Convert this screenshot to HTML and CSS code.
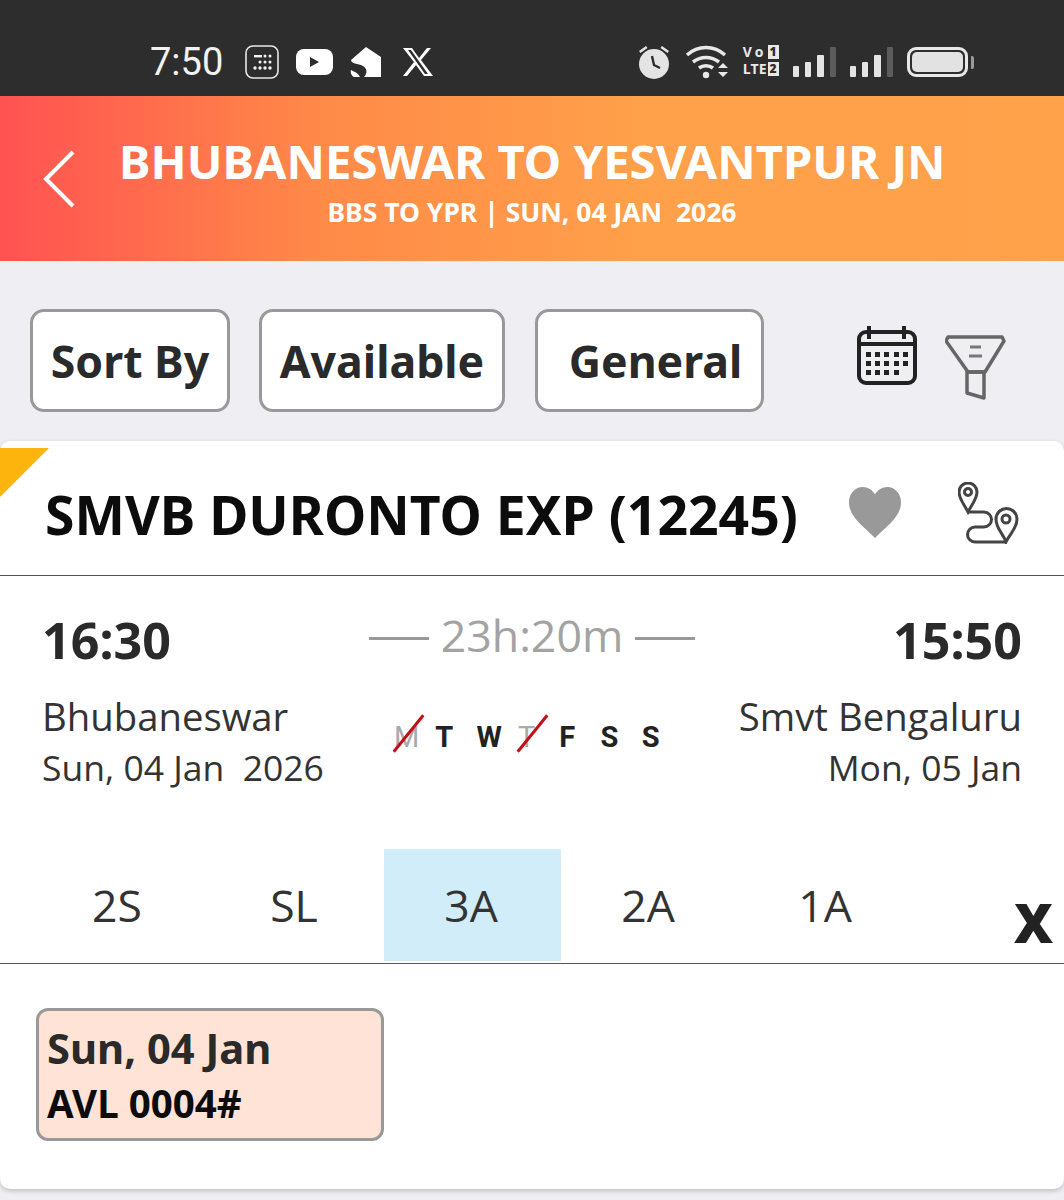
FILE: index.html
```html
<!DOCTYPE html>
<html lang="en">
<head>
    <meta charset="UTF-8">
    <meta name="viewport" content="width=device-width, initial-scale=1.0">
    <title>BHUBANESWAR TO YESVANTPUR JN</title>
    <link rel="stylesheet" href="styles.css">
</head>
<body>
    <div class="statusBar">
        <span class="clock">7:50</span>
        <div class="statusLeft">
            <svg width="34" height="34" viewBox="0 0 34 34"><rect x="1" y="1" width="32" height="32" rx="7" fill="none" stroke="#e8e8e8" stroke-width="1.6"/><g fill="#f2f2f2"><rect x="9" y="10" width="8" height="2.4"/><circle cx="20" cy="11" r="1.5"/><circle cx="25" cy="11" r="1.5"/><circle cx="15" cy="17" r="1.5"/><circle cx="20" cy="17" r="1.5"/><circle cx="25" cy="17" r="1.5"/><circle cx="10" cy="23" r="1.7"/><circle cx="15" cy="23" r="1.7"/><circle cx="20" cy="23" r="1.7"/><circle cx="25" cy="23" r="1.7"/></g></svg>
            <svg width="37" height="26" viewBox="0 0 37 26"><rect x="0" y="0" width="37" height="26" rx="8" fill="#fff"/><path d="M14 8l9 5-9 5z" fill="#2d2d2d"/></svg>
            <svg width="32" height="32" viewBox="0 0 32 32"><path d="M1 14L16 1l15 10v20H14c4-4 3-10-3-12l-6-1.500C3 17 1 16 1 14z" fill="#fff"/><path d="M1 24c4 2 7 3 9 7H4c-2-1-4-4-3-7z" fill="#fff"/></svg>
            <svg class="xLogo" width="32" height="30" viewBox="0 0 32 30"><path d="M1 1h9l7 10 8-10h4L19 13l12 16h-9l-8-11-9 11H1l11-14zM6 3l17 24h3L9 3z" fill="#fff"/></svg>
        </div>
        <div class="statusRight">
            <svg width="34" height="36" viewBox="0 0 34 36"><g fill="#e4e4e4"><circle cx="17" cy="20" r="15"/><path d="M2 7l7-5 1.500 2-7 5zM32 7l-7-5-1.500 2 7 5z"/></g><path d="M15 12l2 9 6 3" fill="none" stroke="#2d2d2d" stroke-width="2.400"/></svg>
            <svg width="44" height="36" viewBox="0 0 44 36"><g fill="none" stroke="#e8e8e8" stroke-width="3.600"><path d="M2 11c11-10 27-10 38 0"/><path d="M8 18c8-6 18-6 26 0"/><path d="M14 24c4-3 10-3 14 0"/></g><circle cx="21" cy="31" r="3.200" fill="#e8e8e8"/><path d="M38 19l5 5h-10zM33 28h10l-5 5z" fill="#e8e8e8"/></svg>
            <div class="netBadge">
                <div class="netRow"><span class="netVo">Vo</span><b>1</b></div>
                <div class="netRow"><span>LTE</span><b>2</b></div>
            </div>
            <div class="signal"><i class="s1"></i><i class="s2"></i><i class="s3"></i><i class="s4"></i></div>
            <div class="signal"><i class="s1"></i><i class="s2"></i><i class="s3"></i><i class="s4"></i></div>
            <div class="battery"><div class="batteryFill"></div></div>
            <div class="batteryTip"></div>
        </div>
    </div>

    <header class="topHeader">
        <svg class="backIcon" width="34" height="60" viewBox="0 0 34 60"><path d="M31 3L4 30l27 27" fill="none" stroke="#fff" stroke-width="4"/></svg>
        <div class="headerText">
            <h1>BHUBANESWAR TO YESVANTPUR JN</h1>
            <p>BBS TO YPR | SUN, 04 JAN &nbsp;2026</p>
        </div>
    </header>

    <section class="toolbar">
        <button class="toolBtn btnSort">Sort By</button>
        <button class="toolBtn btnAvail">Available</button>
        <button class="toolBtn btnGeneral">General</button>
        <svg class="calIcon" width="60" height="60" viewBox="0 0 60 60">
            <rect x="2" y="7" width="56" height="51" rx="7" fill="none" stroke="#222" stroke-width="4"/>
            <path d="M2 19h56" stroke="#222" stroke-width="4"/>
            <path d="M12 1v13M47 1v13" stroke="#222" stroke-width="4"/>
            <g fill="#222">
                <rect x="9" y="27" width="5" height="5"/><rect x="18" y="27" width="5" height="5"/><rect x="27" y="27" width="5" height="5"/><rect x="37" y="27" width="5" height="5"/><rect x="46" y="27" width="5" height="5"/>
                <rect x="9" y="36" width="5" height="5"/><rect x="18" y="36" width="5" height="5"/><rect x="27" y="36" width="5" height="5"/><rect x="37" y="36" width="5" height="5"/><rect x="46" y="36" width="5" height="5"/>
                <rect x="9" y="45" width="5" height="5"/><rect x="18" y="45" width="5" height="5"/><rect x="27" y="45" width="5" height="5"/><rect x="37" y="45" width="5" height="5"/>
            </g>
        </svg>
        <svg class="funnelIcon" width="62" height="66" viewBox="0 0 62 66">
            <path d="M3 3h54l2 4-19 31h-17L1 7z" fill="none" stroke="#666" stroke-width="3.500" stroke-linejoin="round"/>
            <path d="M22 38h17v26l-17-5z" fill="none" stroke="#666" stroke-width="3.500" stroke-linejoin="round"/>
            <path d="M25 13h11M24 22h13" stroke="#777" stroke-width="3"/>
        </svg>
    </section>

    <main class="card">
        <div class="cornerFlag"></div>
        <div class="trainRow">
            <h2>SMVB DURONTO EXP (12245)</h2>
            <svg class="heartIcon" width="54" height="51" viewBox="0 0 56 50" preserveAspectRatio="none"><path d="M28 50C18 40 1 30 1 15 1 6 8 0 15 0c6 0 10 3 13 7 3-4 7-7 13-7 7 0 14 6 14 15 0 15-17 25-27 35z" fill="#999"/></svg>
            <svg class="routeIcon" width="62" height="62" viewBox="0 0 62 62">
                <g fill="none" stroke="#444" stroke-width="3">
                    <path d="M10 30C6 22 1 17 1 10a9 9 0 0 1 18 0c0 7-5 12-9 20z"/>
                    <circle cx="10" cy="10" r="3.500"/>
                    <path d="M48 60c-3-9-10-13-10-23a10.500 10.500 0 0 1 21 0c0 10-7 14-11 23z"/>
                    <circle cx="48" cy="37" r="4"/>
                    <path d="M10 30h16a7.500 7.500 0 0 1 0 15h-9a7.500 7.500 0 0 0 0 15h31"/>
                </g>
            </svg>
        </div>

        <div class="timeGrid">
            <div class="timeLeft">
                <div class="timeBig">16:30</div>
                <div class="stationName">Bhubaneswar</div>
                <div class="stationDate">Sun, 04 Jan &nbsp;2026</div>
            </div>
            <div class="timeMid">
                <div class="duration"><span class="durDash"></span><span>23h:20m</span><span class="durDash"></span></div>
                <div class="days">
                    <span class="day off">M<i class="strike"></i></span>
                    <span class="day">T</span>
                    <span class="day">W</span>
                    <span class="day off">T<i class="strike"></i></span>
                    <span class="day">F</span>
                    <span class="day">S</span>
                    <span class="day">S</span>
                </div>
            </div>
            <div class="timeRight">
                <div class="timeBig">15:50</div>
                <div class="stationName">Smvt Bengaluru</div>
                <div class="stationDate">Mon, 05 Jan</div>
            </div>
        </div>

        <div class="classTabs">
            <div class="classTab">2S</div>
            <div class="classTab">SL</div>
            <div class="classTab active">3A</div>
            <div class="classTab">2A</div>
            <div class="classTab">1A</div>
            <div class="closeX">X</div>
        </div>

        <div class="availArea">
            <div class="availBox">
                <div class="availDate">Sun, 04 Jan</div>
                <div class="availStatus">AVL 0004#</div>
            </div>
        </div>
    </main>
</body>
</html>
```

FILE: styles.css
```css
* {
    box-sizing: border-box;
    font-family: "Open Sans", "Noto Sans", sans-serif;
}
html, body {
    margin: 0;
    padding: 0;
}
body {
    width: 1064px;
    height: 1200px;
    overflow: hidden;
    background: #eeeef3;
}

/* phone status bar */
.statusBar {
    height: 96px;
    background: #2d2d2d;
    display: flex;
    align-items: center;
    padding: 28px 90px 0 150px;
    color: #f2f2f2;
}
.clock {
    font-family: "Roboto", sans-serif;
    font-size: 38px;
    width: 95px;
}
.statusLeft {
    display: flex;
    align-items: center;
    gap: 17px;
}
.xLogo {
    margin-left: 3px;
}
.statusRight {
    margin-left: auto;
    display: flex;
    align-items: center;
    gap: 14px;
}
.netBadge {
    width: 36px;
    font-family: "Liberation Sans Narrow", "Roboto", sans-serif;
    font-size: 14px;
    font-weight: 700;
    line-height: 14px;
    color: #e8e8e8;
}
.netRow {
    display: flex;
    justify-content: space-between;
    margin-bottom: 3px;
}
.netVo {
    letter-spacing: 3px;
}
.netRow b {
    background: #e8e8e8;
    color: #2d2d2d;
    width: 11px;
    font-size: 12px;
    text-align: center;
}
.signal {
    display: flex;
    align-items: flex-end;
    gap: 6px;
    height: 30px;
}
.signal i {
    width: 6.300px;
    background: #e4e4e4;
    border-radius: 1px;
}
.signal .s1 { height: 11px; }
.signal .s2 { height: 15px; }
.signal .s3 { height: 22px; }
.signal .s4 { height: 30px; background: #5c5c5c; }
.battery {
    width: 61px;
    height: 30px;
    border: 3px solid #e8e8e8;
    border-radius: 9px;
    padding: 2px;
}
.batteryFill {
    height: 100%;
    background: #e2e2e2;
    border-radius: 5px;
}
.batteryTip {
    width: 3px;
    height: 13px;
    margin-left: -11px;
    background: #999;
    border-radius: 0 2px 2px 0;
}

/* orange header */
.topHeader {
    height: 165px;
    background: linear-gradient(90deg, #ff5252 0%, #ff8a48 30%, #ffa04a 60%, #ffa24a 100%);
    display: flex;
    align-items: center;
    padding-left: 42px;
}
.headerText {
    margin: 6px 0 0 43px;
    width: 826px;
    text-align: center;
    color: #fff;
}
.headerText h1 {
    margin: 0;
    font-family: "Noto Sans", sans-serif;
    font-size: 47.300px;
    font-weight: 700;
    line-height: 52px;
    white-space: nowrap;
}
.headerText p {
    margin: 9px 0 0 0;
    font-family: "Noto Sans", sans-serif;
    font-size: 26.500px;
    font-weight: 700;
    line-height: 32px;
}

/* filters row */
.toolbar {
    height: 180px;
    display: flex;
    align-items: center;
    padding: 18px 0 0 30px;
}
.toolBtn {
    height: 103px;
    background: #fff;
    border: 3px solid #999;
    border-radius: 14px;
    font-family: "Noto Sans", sans-serif;
    font-size: 44.600px;
    font-weight: 700;
    color: #2a2a2a;
    padding: 0;
}
.btnSort { width: 200px; }
.btnAvail { width: 246px; margin-left: 29px; }
.btnGeneral { width: 229px; margin-left: 30px; padding-left: 12px; }
.calIcon { margin-left: 93px; margin-top: -10px; }
.funnelIcon { margin-left: 28px; margin-top: 14px; }

/* train card */
.card {
    position: relative;
    height: 748px;
    background: #fff;
    border-radius: 10px;
    box-shadow: 0 2px 5px rgba(0, 0, 0, 0.2);
}
.cornerFlag {
    position: absolute;
    left: 0;
    top: 7px;
    width: 49px;
    height: 49px;
    background: #fdb50d;
    clip-path: polygon(0 0, 100% 0, 0 100%);
}
.trainRow {
    height: 135px;
    border-bottom: 1px solid #555;
    display: flex;
    align-items: center;
    padding: 13px 0 0 45px;
}
.trainRow h2 {
    margin: 0;
    width: 752px;
    font-family: "Noto Sans", sans-serif;
    font-size: 53.500px;
    font-weight: 700;
    color: #0c0c0c;
    white-space: nowrap;
}
.heartIcon { margin-left: 51px; margin-top: -5px; }
.routeIcon { margin-left: 56px; margin-top: -4px; }

.timeGrid {
    display: grid;
    grid-template-columns: 1fr 340px 1fr;
    padding: 32px 42px 0 42px;
    height: 273px;
    color: #333;
}
.timeBig {
    font-family: "Noto Sans", sans-serif;
    font-size: 50.200px;
    font-weight: 700;
    line-height: 64px;
    color: #2a2a2a;
}
.stationName {
    font-size: 38.300px;
    line-height: 52px;
    margin-top: 18px;
}
.stationDate {
    font-size: 35.500px;
    line-height: 50px;
}
.timeRight {
    text-align: right;
}
.duration {
    display: flex;
    align-items: center;
    justify-content: center;
    gap: 12px;
    font-size: 44.700px;
    line-height: 60px;
    margin-top: -3px;
    color: #a3a3a3;
}
.durDash {
    width: 60px;
    height: 3px;
    margin-top: 6px;
    background: #999;
}
.days {
    display: grid;
    grid-template-columns: repeat(7, 41.300px);
    padding-left: 32px;
    margin-top: 54px;
}
.day {
    position: relative;
    font-family: "Roboto", sans-serif;
    font-size: 29px;
    font-weight: 700;
    line-height: 36px;
    color: #222;
}
.day.off {
    font-weight: 400;
    color: #aaa;
}
.strike {
    position: absolute;
    left: -9px;
    top: 13px;
    width: 47px;
    height: 3px;
    background: #c01018;
    transform: rotate(-51deg);
}

/* class tabs */
.classTabs {
    height: 115px;
    display: flex;
    border-bottom: 1px solid #555;
    padding-left: 30px;
}
.classTab {
    width: 177px;
    height: 112px;
    font-size: 44.500px;
    padding: 0 3px 2px 0;
    display: flex;
    align-items: center;
    justify-content: center;
    color: #333;
}
.classTab.active {
    background: #d0edf9;
}
.closeX {
    margin-left: auto;
    margin-right: 11px;
    margin-bottom: 13px;
    align-self: flex-end;
    font-size: 54px;
    font-weight: 800;
    line-height: 56px;
    color: #222;
}

/* availability */
.availArea {
    padding: 44px 0 0 36px;
}
.availBox {
    width: 348px;
    height: 133px;
    background: #ffe3d6;
    border: 3px solid #999;
    border-radius: 12px;
    padding: 8px 0 0 8px;
}
.availDate {
    font-family: "Noto Sans", sans-serif;
    font-size: 41.700px;
    font-weight: 700;
    line-height: 57px;
    color: #2a2a2a;
}
.availStatus {
    font-family: "Noto Sans", sans-serif;
    font-size: 38.500px;
    font-weight: 700;
    line-height: 55px;
    color: #0c0c0c;
}
```
